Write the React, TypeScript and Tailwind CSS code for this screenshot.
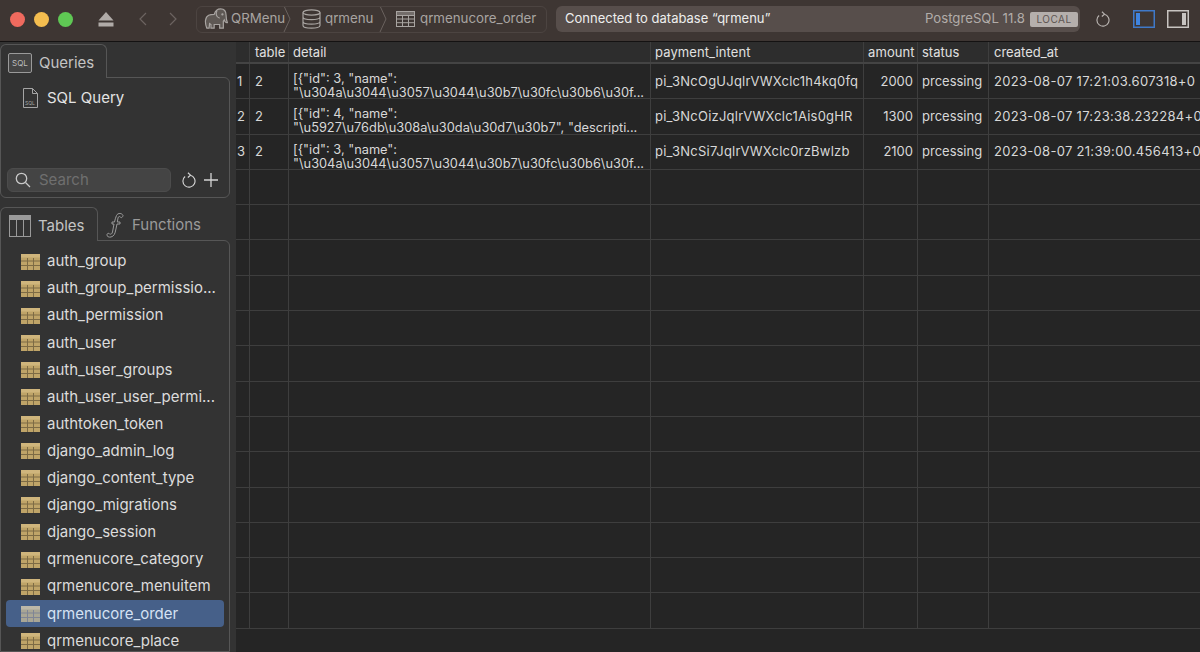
const tables = ["auth_group","auth_group_permissio...","auth_permission","auth_user","auth_user_groups","auth_user_user_permi...","authtoken_token","django_admin_log","django_content_type","django_migrations","django_session","qrmenucore_category","qrmenucore_menuitem","qrmenucore_order","qrmenucore_place"];

const L1 = '[{"id": 3, "name":';
const L2 = '"\\u304a\\u3044\\u3057\\u3044\\u30b7\\u30fc\\u30b6\\u30f...';
const rows = [
  { n: "1", t: "2", a: L1, b: L2, p: "pi_3NcOgUJqlrVWXclc1h4kq0fq", m: "2000", c: "2023-08-07 17:21:03.607318+0" },
  { n: "2", t: "2", a: '[{"id": 4, "name":', b: '"\\u5927\\u76db\\u308a\\u30da\\u30d7\\u30b7", "descripti...', p: "pi_3NcOizJqlrVWXclc1Ais0gHR", m: "1300", c: "2023-08-07 17:23:38.232284+0" },
  { n: "3", t: "2", a: L1, b: L2, p: "pi_3NcSi7JqlrVWXclc0rzBwlzb", m: "2100", c: "2023-08-07 21:39:00.456413+0" },
];
const cols = "grid grid-cols-[14px_39px_362px_213px_54px_71px_1fr]";
const cell = "border-r border-[#3e3e3e] overflow-hidden whitespace-nowrap";

function TableIcon({ dim }: { dim?: boolean }) {
  const f = dim ? "#a9a695" : "#bfa468";
  const s = dim ? "#7f8595" : "#7d6b45";
  return (
    <svg width="19" height="16" viewBox="0 0 19 16" className="shrink-0">
      <rect x="0" y="0" width="19" height="16" fill={f} />
      <rect x="0" y="0" width="19" height="3.5" fill={dim ? "#bdb8a8" : "#cfb57c"} />
      <path d="M0 7h19M0 11.5h19M6.500 4v12M12.500 4v12" stroke={s} strokeWidth="1" />
    </svg>
  );
}

function Elephant() {
  return (
    <svg width="24" height="22" viewBox="0 0 26 24" fill="none" stroke="#a8a4a1" strokeWidth="1.300" className="shrink-0">
      <path d="M3 22c-2.500-6-2-12 2-14 2-1 4-1 6-1 1-3 3-6 7-6 4 0 6 3 6 7 0 4 .5 6 1.500 8-1.500.5-3-1-3.500-3l-1 1.500V22h-4v-4h-6v4H7.500v-4l-1.500-1-.5 5z" fill="#8f8b88" fillOpacity="0.4" />
      <path d="M14 3c-1.500 3-1 7 3 8" />
      <circle cx="20" cy="7" r=".6" fill="#a8a4a1" />
    </svg>
  );
}

function Chevron({ dir, color }: { dir: "l" | "r"; color: string }) {
  return (
    <svg width="10" height="14" viewBox="0 0 10 14" fill="none" stroke={color} strokeWidth="1.200">
      <path d={dir === "l" ? "M8 1 2 7l6 6" : "M2 1l6 6-6 6"} />
    </svg>
  );
}

function Crumb() {
  return (
    <svg width="8" height="26" viewBox="0 0 8 26" fill="none" stroke="#6a625f" strokeWidth="1" className="shrink-0">
      <path d="M1 0l6 13-6 13" />
    </svg>
  );
}

function Refresh({ color = "#cfcac7", size = 18 }: { color?: string; size?: number }) {
  return (
    <svg width={size} height={size} viewBox="0 0 18 18" fill="none" stroke={color} strokeWidth="1.300" className="shrink-0">
      <path d="M10.500 3.600A6.800 6.800 0 1 1 4.600 5" />
      <path d="M7.800 .8l2.900 2.800-3 2.600" />
    </svg>
  );
}

function Tab({ label, icon, w }: { label: string; icon: React.ReactNode; w: string }) {
  return (
    <div className={`${w} shrink-0 flex items-center pt-[3px] rounded-t-md border border-b-0 border-[#565656] bg-[#333333] text-[#c4c4c4] relative z-10 -mb-px`}>
      {icon}
      <span className="text-[15px]">{label}</span>
    </div>
  );
}

export default function App() {
  return (
    <div className="w-[1200px] h-[652px] overflow-hidden flex flex-col bg-[#252525] font-['Inter',Arial,sans-serif]">
      <header className="h-[42px] shrink-0 flex items-center pb-[3px] bg-[#3e3633] border-b border-[#141212]">
        <div className="flex items-center gap-[9px] pl-[10px]">
          <span className="w-[15px] h-[15px] rounded-full bg-[#ef6a5e]" />
          <span className="w-[15px] h-[15px] rounded-full bg-[#f4bd4f]" />
          <span className="w-[15px] h-[15px] rounded-full bg-[#5fc854]" />
        </div>
        <svg width="16" height="15" viewBox="0 0 16 15" className="ml-[25px] shrink-0" fill="#b0aba8">
          <path d="M8 0l7.500 8.500H.5z" />
          <rect x="0.500" y="10.500" width="15" height="4" />
        </svg>
        <div className="ml-[24px] flex gap-[20px]">
          <Chevron dir="l" color="#6c6461" />
          <Chevron dir="r" color="#6c6461" />
        </div>
        <nav className="ml-[18px] w-[351px] h-[27px] rounded-md border border-[#4c4441] flex items-center pl-[7px] text-[13.3px] text-[#a8a4a1] overflow-hidden whitespace-nowrap">
          <Elephant />
          <span className="ml-[3px] w-[52px] shrink-0">QRMenu</span>
          <Crumb />
          <svg width="19" height="20" viewBox="0 0 19 20" fill="none" stroke="#a8a4a1" strokeWidth="1.200" className="ml-[11px] shrink-0">
            <ellipse cx="9.500" cy="3.500" rx="8.500" ry="2.600" />
            <path d="M1 3.500v13c0 1.500 3.800 2.600 8.500 2.600s8.500-1.100 8.500-2.600v-13M1 8c0 1.500 3.800 2.600 8.500 2.600S18 9.500 18 8M1 12.500c0 1.500 3.800 2.600 8.500 2.600s8.500-1.100 8.500-2.600" />
          </svg>
          <span className="ml-[4px] w-[54px] shrink-0">qrmenu</span>
          <Crumb />
          <svg width="19" height="16" viewBox="0 0 19 16" fill="none" stroke="#a8a4a1" strokeWidth="1" className="ml-[9px] shrink-0">
            <rect x="0.500" y="0.500" width="18" height="15" />
            <path d="M0.500 4.500h18M0.500 8h18M0.500 11.700h18M6.500 4.500v11M12.500 4.500v11" />
            <rect x="0.500" y="0.500" width="18" height="4" fill="#a8a4a1" fillOpacity="0.5" />
          </svg>
          <span className="ml-[5px]">qrmenucore_order</span>
        </nav>
        <div className="ml-[9px] w-[524px] h-[26px] rounded-md bg-[#574e4b] flex items-center pl-[9px] pr-[2px]">
          <span className="text-[#eeeeee] text-[13px]">Connected to database “qrmenu”</span>
          <span className="ml-auto text-[#b1aca9] text-[13.2px]">PostgreSQL 11.8</span>
          <span className="ml-[5px] h-[15px] w-[48px] rounded-[2px] bg-[#b5afac] text-[#5d5552] text-[10px] tracking-[0.5px] flex items-center justify-center">LOCAL</span>
        </div>
        <div className="ml-[15px]"><Refresh color="#b8b3b0" size={16} /></div>
        <svg width="22" height="18" viewBox="0 0 22 18" className="ml-[22px] shrink-0" fill="none">
          <rect x="0.750" y="0.750" width="20.500" height="16.500" stroke="#3f79c9" strokeWidth="1.500" />
          <rect x="3" y="3" width="4" height="12" fill="#3f84e0" />
        </svg>
        <svg width="22" height="18" viewBox="0 0 22 18" className="ml-[12px] shrink-0" fill="none">
          <rect x="0.750" y="0.750" width="20.500" height="16.500" stroke="#c8c4c1" strokeWidth="1.500" />
          <rect x="15" y="3" width="4" height="12" fill="#c8c4c1" />
        </svg>
      </header>

      <div className="flex-1 flex min-h-0">
        <aside className="w-[236px] shrink-0 bg-[#333333] pt-[2px] pr-[6px] flex flex-col overflow-hidden">
          <Tab
            w="w-[107px] h-[34px]"
            label="Queries"
            icon={
              <span className="ml-[7px] mr-[7px] w-[24px] h-[20px] rounded-[2px] border border-[#9a9a9a] bg-[#444444] text-[8px] leading-none text-[#bdbdbd] flex items-center justify-center">SQL</span>
            }
          />
          <section className="h-[121px] shrink-0 rounded-tr-md rounded-b-md border border-[#565656] flex flex-col">
            <div className="flex items-center h-[37px] pl-[22px] gap-[9px] text-[#e4e4e4] text-[15px] pt-[3px]">
              <div className="relative w-[15px] h-[20px] shrink-0">
                <svg width="15" height="20" viewBox="0 0 15 20" fill="none" stroke="#a5a5a5" strokeWidth="1">
                  <path d="M.5.500h9l5 5v14H.500zM9.500.500v5h5" />
                </svg>
                <span className="absolute left-[2px] bottom-[2px] text-[5px] leading-none text-[#a5a5a5]">SQL</span>
              </div>
              <span>SQL Query</span>
            </div>
            <div className="mt-auto mb-[5px] flex items-center pl-[6px]">
              <div className="w-[164px] h-[24px] rounded-md bg-[#444444] border border-[#4c4c4c] flex items-center pl-[7px] gap-[8px]">
                <svg width="16" height="16" viewBox="0 0 16 16" fill="none" stroke="#c9c9c9" strokeWidth="1.300" className="shrink-0">
                  <circle cx="6.500" cy="6.500" r="5.200" />
                  <path d="M10.500 10.500 15 15" />
                </svg>
                <span className="text-[15px] text-[#6f6f6f]">Search</span>
              </div>
              <div className="ml-[10px]"><Refresh color="#d4d4d4" size={16} /></div>
              <svg width="14" height="14" viewBox="0 0 14 14" stroke="#d4d4d4" strokeWidth="1.300" className="ml-[7px]"><path d="M7 0v14M0 7h14" /></svg>
            </div>
          </section>

          <div className="flex mt-[9px] h-[33px] shrink-0">
            <Tab
              w="w-[98px] h-[34px]"
              label="Tables"
              icon={
                <svg width="22" height="22" viewBox="0 0 22 22" fill="none" stroke="#9a9a9a" strokeWidth="1" className="ml-[8px] mr-[7px] shrink-0">
                  <rect x=".5" y=".5" width="21" height="21" />
                  <rect x=".5" y=".5" width="21" height="4" fill="#9a9a9a" />
                  <path d="M7.500 4.500v17M14.500 4.500v17" />
                </svg>
              }
            />
            <div className="flex items-center pt-[3px] text-[#9a9a9a]">
              <svg width="19" height="26" viewBox="0 0 19 26" fill="none" stroke="#9a9a9a" strokeWidth="1" className="ml-[7px] mr-[8px] shrink-0">
                <path d="M18 3.500C17 1 13 .5 11.500 3.500 10.500 5.500 10 8 9.500 10H7v2h2l-1.500 8c-.5 2-1.500 2.500-3 2-.5-1-2-1-2.500.5-.5 2 2 3 4 2.500 3-.7 4-3.500 4.500-6L12 12h3v-2h-2.700l.7-4c.3-1.500 1.500-2 2.300-1 .5 1 2.200 1 2.700-1.500z" />
              </svg>
              <span className="text-[15px]">Functions</span>
            </div>
          </div>
          <section className="flex-1 rounded-tr-md border border-[#565656] pt-[7px] flex flex-col min-h-0">
            {tables.map((t) => {
              const sel = t === "qrmenucore_order";
              return (
                <div key={t} className={`h-[27.1px] shrink-0 flex items-center rounded-[4px] ${sel ? "bg-[#466089] text-[#d5e2f3] ml-[5px] mr-[5px] pl-[15px]" : "text-[#dcdcdc] pl-[20px]"} gap-[7px] text-[15px]`}>
                  <TableIcon dim={sel} />
                  <span className="whitespace-nowrap">{t}</span>
                </div>
              );
            })}
          </section>
        </aside>

        <main className="flex-1 min-w-0 flex flex-col text-[13px] text-[#d8d8d8] overflow-hidden">
          <div className={`${cols} h-[22px] shrink-0 bg-[#2d2d2d] border-b-2 border-[#444444] text-[#e0e0e0] leading-[20px]`}>
            <div className={cell} />
            <div className={`${cell} pl-[5px]`}>table</div>
            <div className={`${cell} pl-[4px]`}>detail</div>
            <div className={`${cell} pl-[4px] tracking-[0.1px]`}>payment_intent</div>
            <div className={`${cell} pl-[4px] tracking-[0.1px]`}>amount</div>
            <div className={`${cell} pl-[4px]`}>status</div>
            <div className="pl-[5px] whitespace-nowrap overflow-hidden">created_at</div>
          </div>
          {rows.map((r) => (
            <div key={r.n} className={`${cols} h-[35.3px] shrink-0 border-b border-[#3e3e3e] items-stretch`}>
              <div className={`${cell} pl-px pt-px flex items-center`}>{r.n}</div>
              <div className={`${cell} pl-[5px] pt-px flex items-center`}>{r.t}</div>
              <div className={`${cell} pl-[4px] pt-[8px] leading-[14px] text-[12.8px]`}>
                <div>{r.a}</div>
                <div>{r.b}</div>
              </div>
              <div className={`${cell} pl-[4px] pt-px flex items-center tracking-[0.22px]`}>{r.p}</div>
              <div className={`${cell} pr-[4px] pt-px flex items-center justify-end`}>{r.m}</div>
              <div className={`${cell} pl-[4px] pt-px flex items-center`}>prcessing</div>
              <div className="pl-[5px] pt-px flex items-center whitespace-nowrap tracking-[0.3px]">{r.c}</div>
            </div>
          ))}
          {Array.from({ length: 13 }, (_, i) => (
            <div key={i} className={`${cols} h-[35.3px] shrink-0 border-b border-[#3e3e3e]`}>
              <div className={cell} />
              <div className={cell} />
              <div className={cell} />
              <div className={cell} />
              <div className={cell} />
              <div className={cell} />
              <div />
            </div>
          ))}
        </main>
      </div>
    </div>
  );
}
